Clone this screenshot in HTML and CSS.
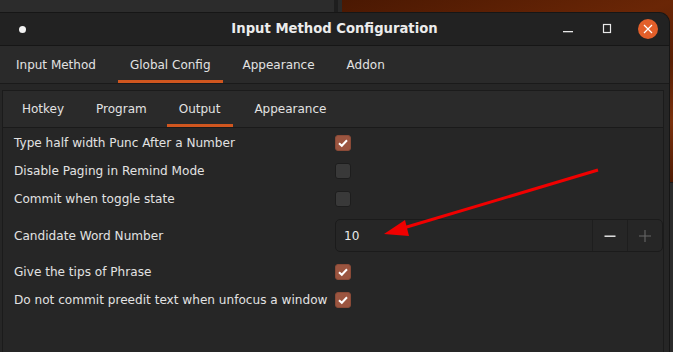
FILE: index.html
```html
<!DOCTYPE html>
<html>
<head>
<meta charset="utf-8">
<link rel="stylesheet" href="styles.css">
</head>
<body>
<div class="desktop">
  <div class="bg-window"></div>
  <div class="wallpaper"></div>
  <div class="bg-window-right"></div>

  <div class="window">
    <div class="titlebar">
      <span class="dot"></span>
      <span class="title">Input Method Configuration</span>
      <div class="controls">
        <span class="ctl min"><svg width="12" height="12" viewBox="0 0 12 12"><rect x="1" y="8" width="10" height="1.3" fill="#e8e8e8"/></svg></span>
        <span class="ctl max"><svg width="12" height="12" viewBox="0 0 12 12"><rect x="2.5" y="1.5" width="7" height="8" fill="none" stroke="#e8e8e8" stroke-width="1.2"/></svg></span>
        <span class="ctl close"><svg width="20" height="20" viewBox="0 0 20 20"><circle cx="10" cy="10" r="10" fill="#e25f2a"/><path d="M6 6 L14 14 M14 6 L6 14" stroke="#fff" stroke-width="1.2"/></svg></span>
      </div>
    </div>

    <div class="tabs outer-tabs">
      <span class="tab">Input Method</span>
      <span class="tab active">Global Config</span>
      <span class="tab">Appearance</span>
      <span class="tab">Addon</span>
    </div>

    <div class="body">
      <div class="frame">
        <div class="tabs inner-tabs">
          <span class="tab">Hotkey</span>
          <span class="tab">Program</span>
          <span class="tab active">Output</span>
          <span class="tab">Appearance</span>
        </div>
        <div class="options">
          <div class="row">
            <span class="label">Type half width Punc After a Number</span>
            <span class="check on"><svg width="16" height="16" viewBox="0 0 16 16"><path d="M4 8.2 L6.8 10.8 L12 5.2" fill="none" stroke="#fff" stroke-width="2"/></svg></span>
          </div>
          <div class="row">
            <span class="label">Disable Paging in Remind Mode</span>
            <span class="check"></span>
          </div>
          <div class="row">
            <span class="label">Commit when toggle state</span>
            <span class="check"></span>
          </div>
          <div class="row spin-row">
            <span class="label">Candidate Word Number</span>
            <div class="spin">
              <span class="spin-value">10</span>
              <span class="spin-btn"><svg width="12" height="12" viewBox="0 0 12 12"><rect x="0.5" y="5.5" width="11" height="1.4" fill="#f0f0f0"/></svg></span>
              <span class="spin-btn"><svg width="14" height="14" viewBox="0 0 14 14"><path d="M7 1 V13 M1 7 H13" stroke="#666" stroke-width="1.1"/></svg></span>
            </div>
          </div>
          <div class="row">
            <span class="label">Give the tips of Phrase</span>
            <span class="check on"><svg width="16" height="16" viewBox="0 0 16 16"><path d="M4 8.2 L6.8 10.8 L12 5.2" fill="none" stroke="#fff" stroke-width="2"/></svg></span>
          </div>
          <div class="row">
            <span class="label">Do not commit preedit text when unfocus a window</span>
            <span class="check on"><svg width="16" height="16" viewBox="0 0 16 16"><path d="M4 8.2 L6.8 10.8 L12 5.2" fill="none" stroke="#fff" stroke-width="2"/></svg></span>
          </div>
        </div>
      </div>
    </div>

    <svg class="arrow" width="673" height="352" viewBox="0 0 673 352">
      <line x1="598" y1="170" x2="400" y2="229" stroke="#f00000" stroke-width="3"/>
      <polygon points="384,234 405,220 409,236" fill="#f00000"/>
    </svg>
  </div>
</div>
</body>
</html>
```

FILE: styles.css
```css
* { box-sizing: border-box; }
html, body { margin: 0; padding: 0; }
body {
  width: 673px;
  height: 352px;
  overflow: hidden;
  background: #2a2a2a;
  font-family: "DejaVu Sans", sans-serif;
  font-size: 12.1px;
  color: #e2e2e2;
}
.desktop {
  position: relative;
  width: 673px;
  height: 352px;
}
.bg-window {
  position: absolute;
  left: 0; top: 0;
  width: 338px; height: 20px;
  background: #2c2c2c;
  border-right: 4px solid #1e1e1e;
}
.wallpaper {
  position: absolute;
  left: 342px; top: 0;
  width: 331px; height: 182px;
  background: linear-gradient(160deg, #4a1802 0%, #6a2606 40%, #5a1f04 60%, #7a300c 80%, #4e1a03 100%);
}
.bg-window-right {
  position: absolute;
  left: 669px; top: 182px;
  width: 4px; height: 170px;
  background: #2b2b2b;
  border-top: 1px solid #1a1a1a;
}
.window {
  position: absolute;
  left: 0; top: 13px;
  width: 669px; height: 339px;
  background: #262626;
  border-top-right-radius: 10px;
  box-shadow: 0 0 0 1px #161616;
  display: flex;
  flex-direction: column;
}
.titlebar {
  height: 33px;
  flex: none;
  background: #222222;
  border-top-right-radius: 10px;
  border-bottom: 1px solid #161616;
  display: flex;
  align-items: center;
  position: relative;
}
.dot {
  width: 7px; height: 7px;
  border-radius: 50%;
  background: #f2f2f2;
  margin-left: 19px;
}
.title {
  position: absolute;
  left: 0; right: 0;
  text-align: center;
  font-weight: bold;
  font-size: 13.2px;
  color: #ececec;
  top: 8px;
}
.controls {
  margin-left: auto;
  display: flex;
  align-items: center;
  margin-right: 11px;
}
.ctl { display: flex; align-items: center; justify-content: center; }
.min { width: 12px; margin-right: 27px; }
.max { width: 12px; margin-right: 25px; }
.close { width: 20px; }

.tabs {
  display: flex;
  gap: 8px;
  height: 38px;
  flex: none;
  background: #2a2a2a;
  border-bottom: 1px solid #1a1a1a;
}
.outer-tabs { padding-left: 4px; }
.outer-tabs .tab:first-child { margin-right: 2px; }
.tab {
  padding: 0 12px;
  display: flex;
  align-items: center;
  border-bottom: 3px solid transparent;
  padding-top: 3px;
  font-size: 12px;
  color: #e2e2e2;
}
.tab.active { border-bottom-color: #d0561f; }
.inner-tabs .tab.active { padding: 3px 13px 0 12px; margin-right: 1px; }

.body {
  flex: 1;
  padding: 6px 5px 0 2px;
  display: flex;
}
.frame {
  flex: 1;
  border: 1px solid #1b1b1b;
  border-bottom: none;
  display: flex;
  flex-direction: column;
}
.inner-tabs { padding-left: 7px; height: 37px; }
.options {
  display: flex;
  flex-direction: column;
  padding-left: 11px;
  padding-top: 1px;
}
.row {
  display: flex;
  align-items: center;
  height: 28px;
}
.label {
  width: 321px;
  flex: none;
  white-space: nowrap;
}
.check {
  width: 16px; height: 16px;
  border-radius: 3px;
  background: #393939;
  border: 1px solid #1d1d1d;
  display: flex;
}
.check.on {
  background: #9b5540;
  border-color: #8a4a37;
}
.check svg { margin: -1px; }
.spin-row { height: 45px; }
.spin {
  flex: 1;
  height: 33px;
  border: 1px solid #1b1b1b;
  border-radius: 5px;
  display: flex;
  align-items: stretch;
  background: #262626;
}
.spin-value {
  flex: 1;
  display: flex;
  align-items: center;
  padding-left: 8px;
  padding-top: 1px;
  color: #ececec;
}
.spin-btn {
  width: 35px;
  border-left: 1px solid #1e1e1e;
  display: flex;
  align-items: center;
  justify-content: center;
}
.arrow {
  position: absolute;
  left: 0; top: -13px;
  pointer-events: none;
}
```
